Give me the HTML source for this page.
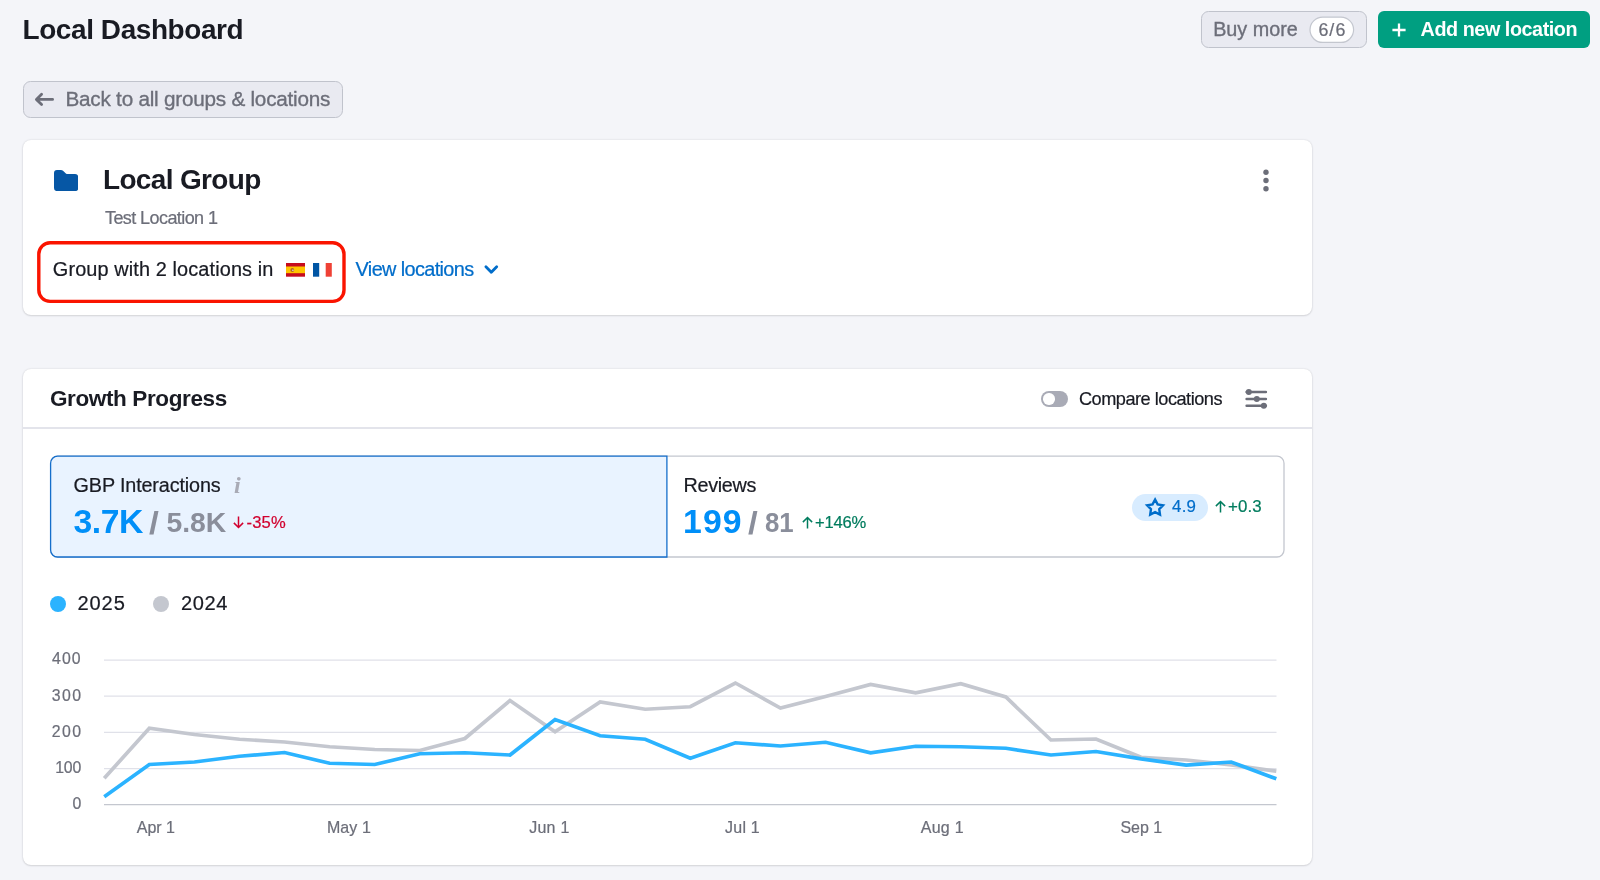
<!DOCTYPE html>
<html lang="en"><head><meta charset="utf-8"><title>Local Dashboard</title>
<style>
html,body{margin:0;padding:0;}
body{width:1600px;height:880px;overflow:hidden;background:#f4f5f9;position:relative;font-family:"Liberation Sans", Arial, sans-serif;}
.t{position:absolute;white-space:pre;font-family:"Liberation Sans", Arial, sans-serif;line-height:normal;}
.abs{position:absolute;box-sizing:border-box;}
.card{background:#fff;border-radius:8px;box-shadow:0 0 2px rgba(25,27,35,.15),0 1px 2px rgba(25,27,35,.11);}
.btn{background:#e9eaf1;border:1px solid #c0c3cc;border-radius:7.5px;}
</style></head><body>
<!-- top bar -->
<div class="abs btn" style="left:1201px;top:10.7px;width:166px;height:37.4px;"></div>
<svg class="abs" style="left:1300px;top:10px;" width="64" height="40" viewBox="1300 10 64 40"><rect x="1310" y="17.2" width="43.6" height="25.2" rx="12.6" fill="#fff" stroke="#c4c7cf" stroke-width="1.2"/></svg>
<div class="abs" style="left:1378px;top:10.7px;width:211.5px;height:37.4px;background:#009f81;border-radius:6px;"></div>
<svg class="abs" style="left:1392.2px;top:22.5px;" width="14" height="14" viewBox="0 0 14 14"><path d="M7 0.4V13.6M0.4 7H13.6" stroke="#fff" stroke-width="2.3" fill="none"/></svg>
<!-- back button -->
<div class="abs btn" style="left:23px;top:81px;width:320px;height:37px;"></div>
<svg class="abs" style="left:30px;top:90px;" width="26" height="20" viewBox="0 0 26 20"><path d="M22.6 9.4H6.6M11.6 4.2L6.4 9.4L11.6 14.6" stroke="#6c6e79" stroke-width="2.8" fill="none" stroke-linecap="round" stroke-linejoin="round"/></svg>
<!-- card 1 -->
<div class="abs card" style="left:22.8px;top:139.6px;width:1289px;height:175.6px;"></div>
<svg class="abs" style="left:54px;top:169.8px;" width="24.2" height="21.1" viewBox="0 0 24.2 21.1"><path d="M0 3A3 3 0 0 1 3 0H6.8C7.8 0 8.6 .35 9.3 1L11.6 3.2C12.3 3.8 13 4.1 14 4.1H21.2A3 3 0 0 1 24.2 7.1V18.1A3 3 0 0 1 21.2 21.1H3A3 3 0 0 1 0 18.1Z" fill="#0657a5"/></svg>
<svg class="abs" style="left:1261px;top:168px;" width="10" height="26" viewBox="0 0 10 26"><circle cx="5" cy="4.3" r="2.7" fill="#6c6e79"/><circle cx="5" cy="12.5" r="2.7" fill="#6c6e79"/><circle cx="5" cy="20.7" r="2.7" fill="#6c6e79"/></svg>
<svg class="abs" style="left:30px;top:235px;" width="325" height="75" viewBox="30 235 325 75"><rect x="38.8" y="242.8" width="305.2" height="58.6" rx="11.3" fill="none" stroke="#fa1400" stroke-width="3.4"/></svg>
<!-- flags -->
<svg class="abs" style="left:286.2px;top:263.2px;" width="19" height="13.7" viewBox="0 0 19 13.7"><rect width="19" height="13.7" fill="#c60b1e"/><rect y="3.5" width="19" height="6.7" fill="#ffc400"/><circle cx="6.3" cy="7" r="1.9" fill="#b5651d"/><circle cx="6.9" cy="7.2" r=".8" fill="#e8e8e8"/></svg>
<svg class="abs" style="left:313.2px;top:263.2px;" width="18.8" height="13.7" viewBox="0 0 18.8 13.7"><rect width="18.8" height="13.7" fill="#ffffff"/><rect width="6.2" height="13.7" fill="#0055a4"/><rect x="12.7" width="6.1" height="13.7" fill="#ef4135"/></svg>
<svg class="abs" style="left:480px;top:260px;" width="22" height="18" viewBox="0 0 22 18"><path d="M5.9 6.7L11.3 12.3L16.7 6.7" stroke="#006dca" stroke-width="2.8" fill="none" stroke-linecap="round" stroke-linejoin="round"/></svg>
<!-- card 2 -->
<div class="abs card" style="left:22.8px;top:369px;width:1289px;height:496px;"></div>
<div class="abs" style="left:23px;top:427.3px;width:1288.6px;height:1.3px;background:#e3e4eb;"></div>
<!-- toggle -->
<div class="abs" style="left:1041px;top:391px;width:27px;height:16px;border-radius:8px;background:#a9abb6;"></div>
<div class="abs" style="left:1043.3px;top:393.3px;width:11.4px;height:11.4px;border-radius:50%;background:#fff;"></div>
<!-- settings icon -->
<svg class="abs" style="left:1245px;top:388px;" width="23" height="22" viewBox="0 0 23 22"><g stroke="#6c6e79" stroke-width="2.5" fill="none" stroke-linecap="round"><path d="M1.6 4H20.9M1.6 11H20.9M1.6 17.8H20.9"/></g><g fill="#6c6e79"><circle cx="3.8" cy="4" r="3"/><circle cx="11.8" cy="11" r="3"/><circle cx="18.8" cy="17.8" r="3"/></g></svg>
<!-- tabs -->
<svg class="abs" style="left:40px;top:446px;" width="1260" height="122" viewBox="40 446 1260 122"><rect x="50.6" y="456.2" width="1233.4" height="100.8" rx="7" fill="#fff" stroke="#c4c7cf" stroke-width="1.3"/><path d="M666.9 456.2H57.6A7 7 0 0 0 50.6 463.2V550A7 7 0 0 0 57.6 557H666.9Z" fill="#e9f3ff" stroke="#146ecb" stroke-width="1.3"/></svg>
<svg class="abs" style="left:233.06px;top:515.8px;" width="11" height="13" viewBox="0 0 11 13"><path d="M5.5 0.4V11.3M0.87 6.87L5.5 11.5L10.13 6.87" stroke="#d1002f" stroke-width="1.5" fill="none"/></svg>
<svg class="abs" style="left:801.8px;top:515.7px;" width="11" height="13" viewBox="0 0 11 13"><path d="M5.5 12.6V1.7M0.87 6.13L5.5 1.5L10.13 6.13" stroke="#007c5e" stroke-width="1.5" fill="none"/></svg>
<div class="abs" style="left:1131.9px;top:493.9px;width:76.5px;height:27px;border-radius:14px;background:#d8ecff;"></div>
<svg class="abs" style="left:1140px;top:490px;" width="32" height="34" viewBox="1140 490 32 34"><path d="M1155.10 499.52L1157.65 504.36L1163.04 505.29L1159.23 509.21L1160.01 514.63L1155.10 512.21L1150.19 514.63L1150.97 509.21L1147.16 505.29L1152.55 504.36Z" stroke="#006dca" stroke-width="2.4" fill="none" stroke-linejoin="miter" stroke-miterlimit="10"/></svg>
<svg class="abs" style="left:1214.6px;top:499.6px;" width="11" height="13" viewBox="0 0 11 13"><path d="M5.5 12.6V1.7M0.87 6.13L5.5 1.5L10.13 6.13" stroke="#007c5e" stroke-width="1.5" fill="none"/></svg>
<!-- legend -->
<div class="abs" style="left:50px;top:596px;width:16px;height:16px;border-radius:50%;background:#2bb3ff;"></div>
<div class="abs" style="left:153px;top:596px;width:16px;height:16px;border-radius:50%;background:#c4c7cf;"></div>
<!-- chart -->
<svg class="abs" style="left:0;top:0;" width="1600" height="880" viewBox="0 0 1600 880">
<line x1="104" x2="1276.5" y1="660.05" y2="660.05" stroke="#e0e1e9" stroke-width="1.25"/><line x1="104" x2="1276.5" y1="696.2" y2="696.2" stroke="#e0e1e9" stroke-width="1.25"/><line x1="104" x2="1276.5" y1="732.35" y2="732.35" stroke="#e0e1e9" stroke-width="1.25"/><line x1="104" x2="1276.5" y1="768.5" y2="768.5" stroke="#e0e1e9" stroke-width="1.25"/><line x1="104" x2="1276.5" y1="804.65" y2="804.65" stroke="#c4c7cf" stroke-width="1.25"/>
<polyline points="104.25,778.25 149.33,728.25 194.41,734.50 239.49,739.25 284.57,742.00 329.65,746.75 374.73,749.50 419.81,750.50 464.89,738.50 509.97,700.50 555.05,731.75 600.13,702.00 645.21,709.25 690.29,706.75 735.37,683.00 780.45,708.00 825.53,696.50 870.61,684.50 915.69,692.75 960.77,683.75 1005.85,697.00 1050.93,740.00 1096.01,739.00 1141.09,757.30 1186.17,760.00 1231.25,764.80 1276.33,771.20" fill="none" stroke="#c4c7cf" stroke-width="3.7" stroke-linejoin="miter"/>
<polyline points="104.25,796.75 149.33,764.50 194.41,762.00 239.49,756.25 284.57,752.50 329.65,763.25 374.73,764.50 419.81,753.75 464.89,752.75 509.97,755.00 555.05,719.50 600.13,735.75 645.21,739.25 690.29,758.25 735.37,742.75 780.45,746.00 825.53,742.25 870.61,752.75 915.69,746.25 960.77,746.75 1005.85,748.25 1050.93,755.00 1096.01,751.50 1141.09,758.90 1186.17,765.20 1231.25,762.00 1276.33,778.80" fill="none" stroke="#2bb3ff" stroke-width="3.7" stroke-linejoin="miter"/>
</svg>
<div id="txt" style="position:absolute;left:0;top:0;width:1600px;height:880px;will-change:transform;">
<span id="t_title" class="t" style="left:22.50px;top:14.00px;font-size:27.98px;font-weight:700;color:#191b23;letter-spacing:-0.411px;">Local Dashboard</span>
<span id="t_buy" class="t" style="left:1213.20px;top:18.00px;font-size:19.77px;font-weight:400;color:#6c6e79;letter-spacing:0.000px;-webkit-text-stroke-width:0.35px;">Buy more</span>
<span id="t_66" class="t" style="left:1318.40px;top:20.00px;font-size:17.88px;font-weight:400;color:#6c6e79;letter-spacing:1.050px;-webkit-text-stroke-width:0.22px;">6/6</span>
<span id="t_add" class="t" style="left:1420.60px;top:18.00px;font-size:19.77px;font-weight:700;color:#ffffff;letter-spacing:-0.447px;">Add new location</span>
<span id="t_back" class="t" style="left:65.50px;top:87.00px;font-size:20.71px;font-weight:400;color:#6c6e79;letter-spacing:-0.233px;-webkit-text-stroke-width:0.35px;">Back to all groups &amp; locations</span>
<span id="t_lg" class="t" style="left:103.00px;top:164.00px;font-size:27.98px;font-weight:700;color:#191b23;letter-spacing:-0.650px;">Local Group</span>
<span id="t_test" class="t" style="left:105.00px;top:208.00px;font-size:18.02px;font-weight:400;color:#6c6e79;letter-spacing:-0.586px;-webkit-text-stroke-width:0.22px;">Test Location 1</span>
<span id="t_grp" class="t" style="left:52.80px;top:258.00px;font-size:19.91px;font-weight:400;color:#191b23;letter-spacing:0.108px;-webkit-text-stroke-width:0.22px;">Group with 2 locations in</span>
<span id="t_view" class="t" style="left:355.60px;top:258.00px;font-size:19.91px;font-weight:400;color:#006dca;letter-spacing:-0.638px;-webkit-text-stroke-width:0.22px;">View locations</span>
<span id="t_gp" class="t" style="left:50.00px;top:386.00px;font-size:22.53px;font-weight:700;color:#191b23;letter-spacing:-0.393px;">Growth Progress</span>
<span id="t_cmp" class="t" style="left:1079.00px;top:389.00px;font-size:18.17px;font-weight:400;color:#191b23;letter-spacing:-0.494px;-webkit-text-stroke-width:0.22px;">Compare locations</span>
<span id="t_gbp" class="t" style="left:73.60px;top:474.00px;font-size:19.77px;font-weight:400;color:#191b23;letter-spacing:-0.133px;-webkit-text-stroke-width:0.22px;">GBP Interactions</span>
<span id="t_37k" class="t" style="left:73.50px;top:502.00px;font-size:33.72px;font-weight:700;color:#008ff8;letter-spacing:-0.417px;">3.7K</span>
<span id="t_sl1" class="t" style="left:149.42px;top:505.00px;font-size:31.54px;font-weight:700;color:#8a8e9b;letter-spacing:0.000px;transform:scaleX(1.1222);transform-origin:0 0;">/</span>
<span id="t_58k" class="t" style="left:166.40px;top:506.00px;font-size:28.34px;font-weight:700;color:#8a8e9b;letter-spacing:0.000px;">5.8K</span>
<span id="t_35" class="t" style="left:246.50px;top:513.00px;font-size:16.57px;font-weight:400;color:#d1002f;letter-spacing:0.150px;-webkit-text-stroke-width:0.22px;">-35%</span>
<span id="t_rev" class="t" style="left:683.50px;top:474.00px;font-size:19.77px;font-weight:400;color:#191b23;letter-spacing:-0.292px;-webkit-text-stroke-width:0.22px;">Reviews</span>
<span id="t_199" class="t" style="left:683.00px;top:502.00px;font-size:33.72px;font-weight:700;color:#008ff8;letter-spacing:1.125px;">199</span>
<span id="t_sl2" class="t" style="left:748.27px;top:505.00px;font-size:31.54px;font-weight:700;color:#8a8e9b;letter-spacing:0.000px;transform:scaleX(1.1111);transform-origin:0 0;">/</span>
<span id="t_81" class="t" style="left:765.00px;top:506.00px;font-size:28.34px;font-weight:700;color:#8a8e9b;letter-spacing:0.000px;transform:scaleX(0.9113);transform-origin:0 0;">81</span>
<span id="t_146" class="t" style="left:815.00px;top:513.00px;font-size:16.57px;font-weight:400;color:#007c5e;letter-spacing:-0.188px;-webkit-text-stroke-width:0.22px;">+146%</span>
<span id="t_49" class="t" style="left:1172.00px;top:497.00px;font-size:16.86px;font-weight:400;color:#006dca;letter-spacing:0.250px;-webkit-text-stroke-width:0.22px;">4.9</span>
<span id="t_03" class="t" style="left:1228.00px;top:497.00px;font-size:16.86px;font-weight:400;color:#007c5e;letter-spacing:0.133px;-webkit-text-stroke-width:0.22px;">+0.3</span>
<span id="t_i" class="t" style="left:234.42px;top:473.00px;font-size:22.31px;font-weight:700;color:#a9abb6;letter-spacing:0.000px;font-family:'Liberation Serif',serif;font-style:italic;transform:scaleX(1.0857);transform-origin:0 0;">i</span>
<span id="t_2025" class="t" style="left:77.40px;top:592.00px;font-size:20.06px;font-weight:400;color:#191b23;letter-spacing:0.967px;-webkit-text-stroke-width:0.22px;">2025</span>
<span id="t_2024" class="t" style="left:181.00px;top:592.00px;font-size:20.06px;font-weight:400;color:#191b23;letter-spacing:0.633px;-webkit-text-stroke-width:0.22px;">2024</span>
<span id="t_y400" class="t" style="left:52.00px;top:650.00px;font-size:15.84px;font-weight:400;color:#6c6e79;letter-spacing:1.100px;-webkit-text-stroke-width:0.22px;">400</span>
<span id="t_y300" class="t" style="left:51.80px;top:687.00px;font-size:15.84px;font-weight:400;color:#6c6e79;letter-spacing:1.400px;-webkit-text-stroke-width:0.22px;">300</span>
<span id="t_y200" class="t" style="left:51.80px;top:723.00px;font-size:15.84px;font-weight:400;color:#6c6e79;letter-spacing:1.400px;-webkit-text-stroke-width:0.22px;">200</span>
<span id="t_y100" class="t" style="left:55.20px;top:759.00px;font-size:15.84px;font-weight:400;color:#6c6e79;letter-spacing:-0.200px;-webkit-text-stroke-width:0.22px;">100</span>
<span id="t_y0" class="t" style="left:72.60px;top:795.00px;font-size:15.84px;font-weight:400;color:#6c6e79;letter-spacing:0.000px;-webkit-text-stroke-width:0.22px;">0</span>
<span id="t_xApr" class="t" style="left:136.80px;top:819.00px;font-size:15.99px;font-weight:400;color:#6c6e79;letter-spacing:-0.050px;-webkit-text-stroke-width:0.22px;">Apr 1</span>
<span id="t_xMay" class="t" style="left:326.90px;top:819.00px;font-size:15.99px;font-weight:400;color:#6c6e79;letter-spacing:0.125px;-webkit-text-stroke-width:0.22px;">May 1</span>
<span id="t_xJun" class="t" style="left:529.20px;top:819.00px;font-size:15.99px;font-weight:400;color:#6c6e79;letter-spacing:0.250px;-webkit-text-stroke-width:0.22px;">Jun 1</span>
<span id="t_xJul" class="t" style="left:725.00px;top:819.00px;font-size:15.99px;font-weight:400;color:#6c6e79;letter-spacing:0.250px;-webkit-text-stroke-width:0.22px;">Jul 1</span>
<span id="t_xAug" class="t" style="left:920.80px;top:819.00px;font-size:15.99px;font-weight:400;color:#6c6e79;letter-spacing:0.250px;-webkit-text-stroke-width:0.22px;">Aug 1</span>
<span id="t_xSep" class="t" style="left:1120.40px;top:819.00px;font-size:15.99px;font-weight:400;color:#6c6e79;letter-spacing:0.000px;-webkit-text-stroke-width:0.22px;">Sep 1</span>
</div>
</body></html>
